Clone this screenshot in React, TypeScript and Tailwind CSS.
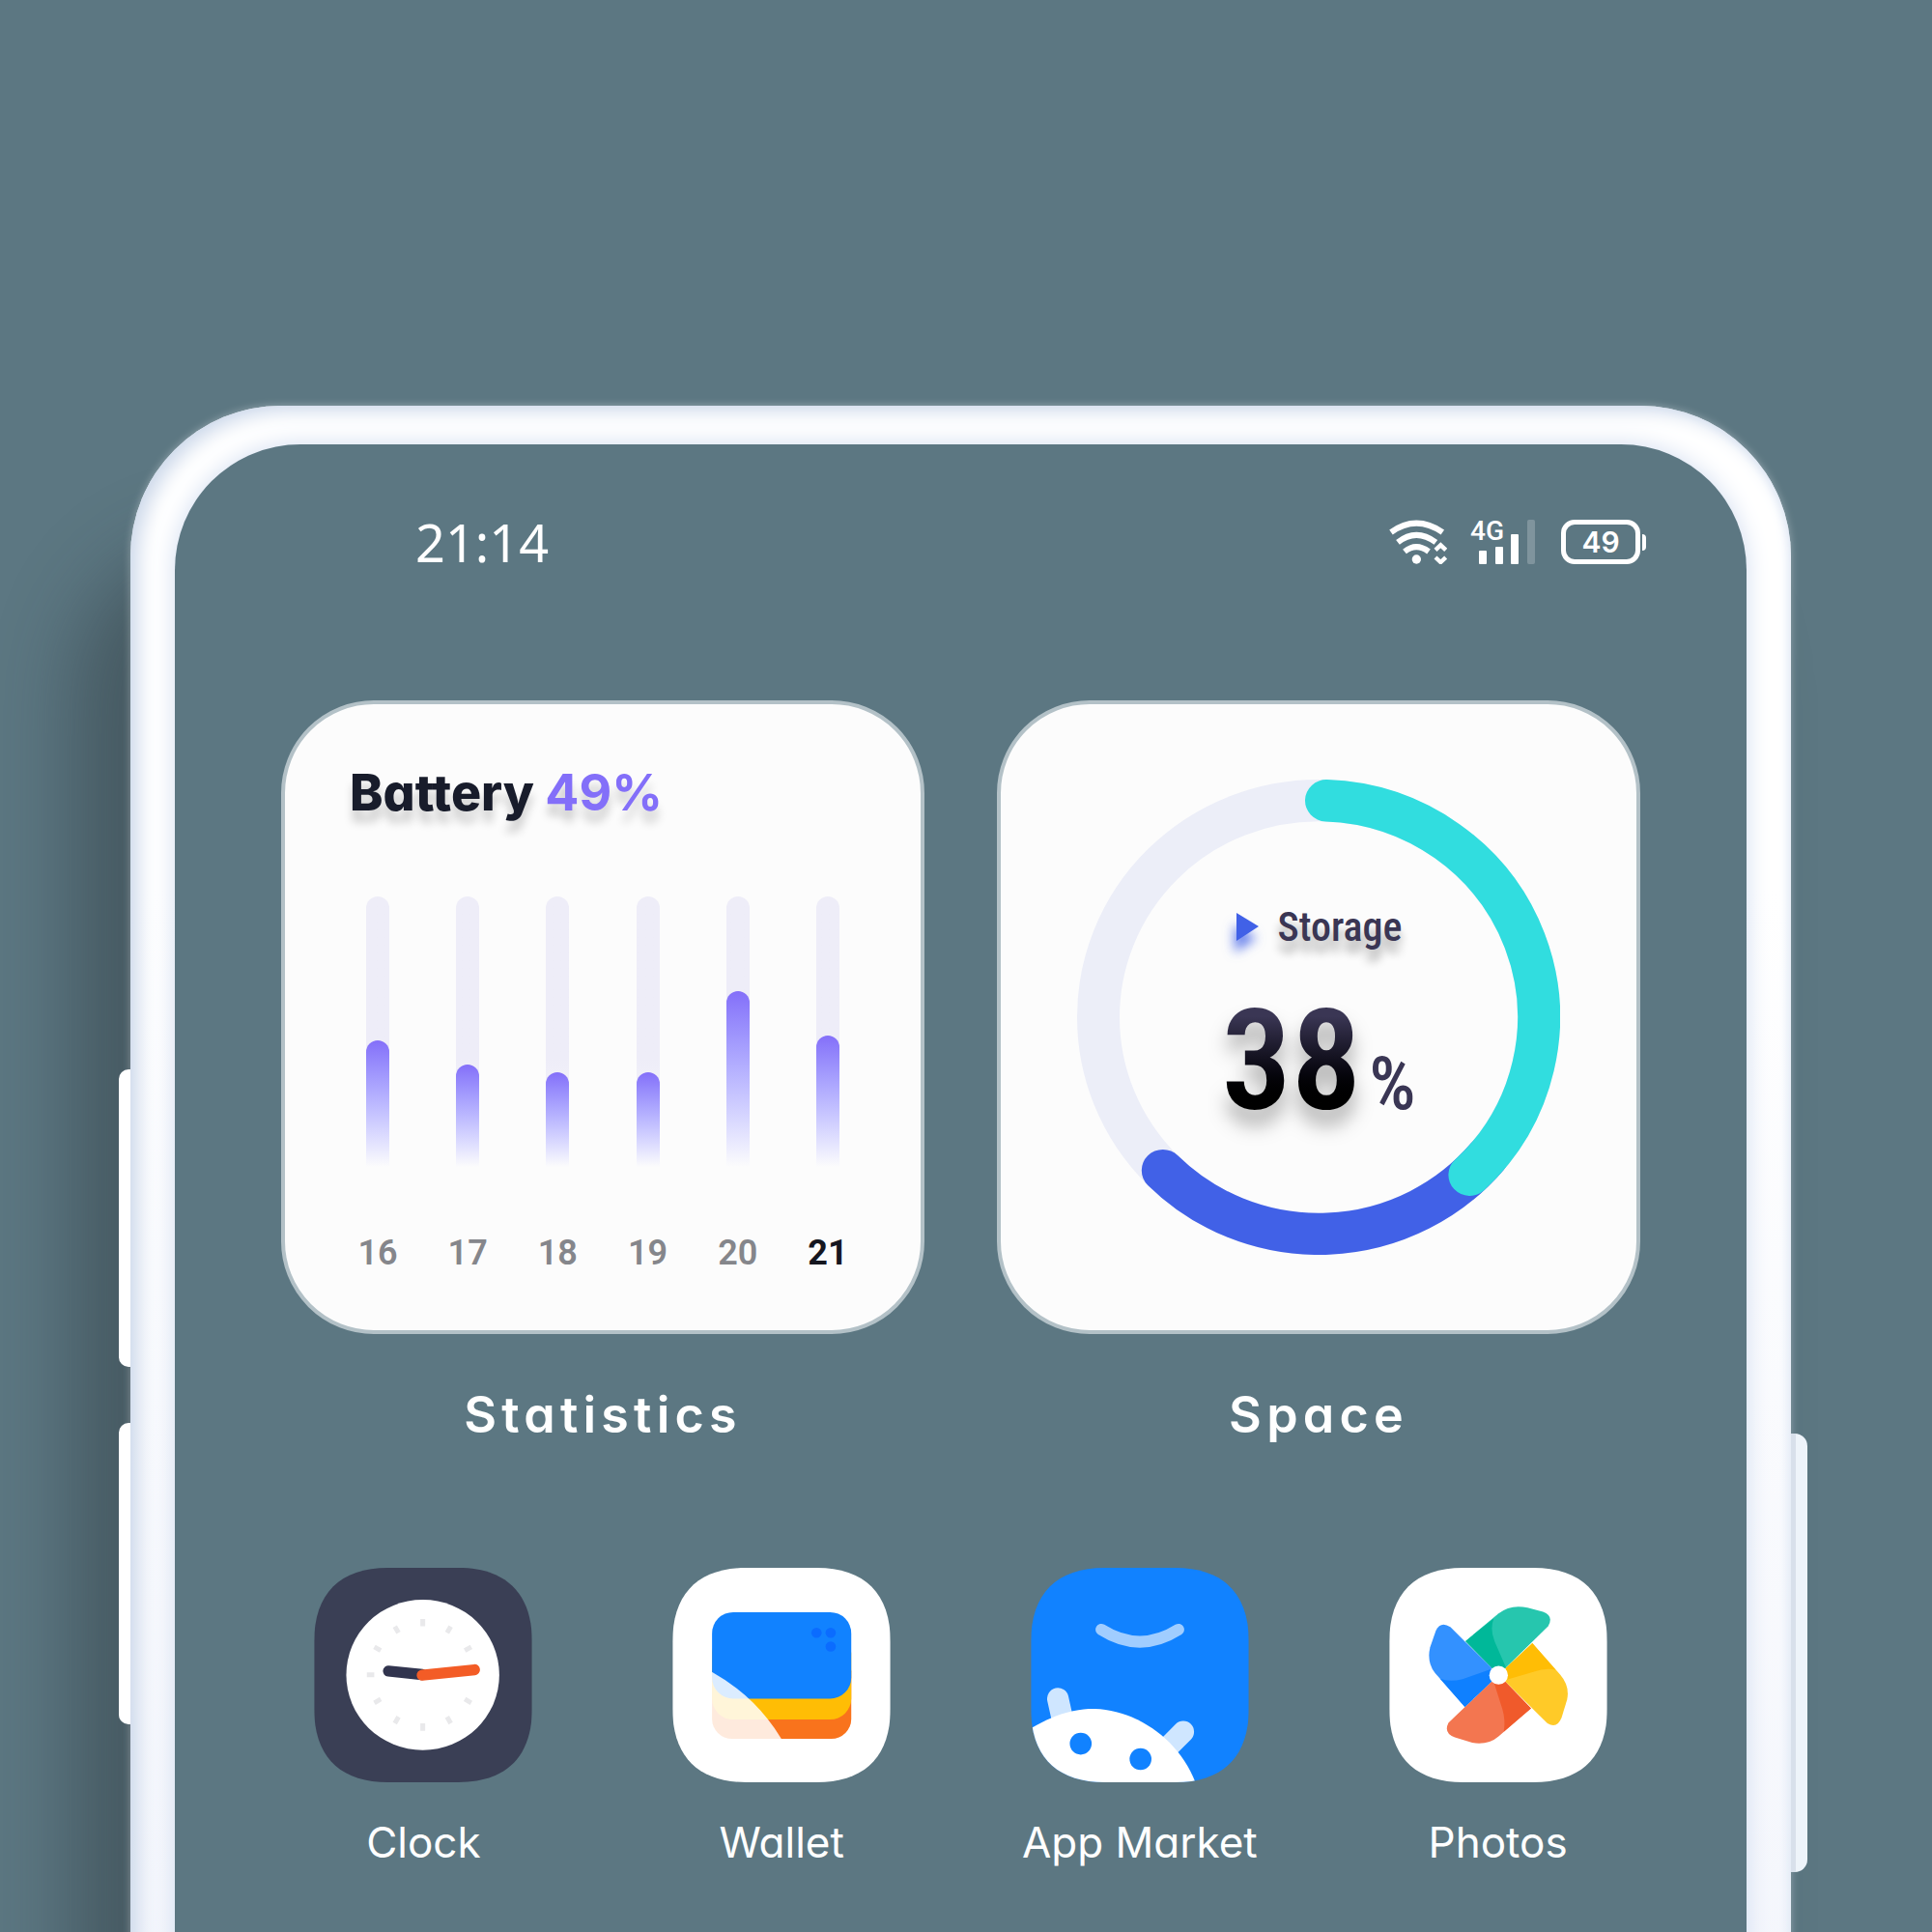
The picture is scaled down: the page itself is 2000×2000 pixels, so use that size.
import React, { useId } from "react";

const days = [
  { day: "16", level: 131 },
  { day: "17", level: 106 },
  { day: "18", level: 98 },
  { day: "19", level: 98 },
  { day: "20", level: 182 },
  { day: "21", level: 136 },
];

function polar(angle: number, r: number) {
  const a = ((angle - 90) * Math.PI) / 180;
  return `${(250 + r * Math.cos(a)).toFixed(1)} ${(250 + r * Math.sin(a)).toFixed(1)}`;
}

function arc(from: number, to: number, r = 228) {
  return `M${polar(from, r)}A${r} ${r} 0 ${to - from > 180 ? 1 : 0} 1 ${polar(to, r)}`;
}

function StatusIcons() {
  return (
    <div className="flex items-center text-white">
      <svg className="mr-6 h-[46px] w-[60px]" viewBox="118 414 180 138" fill="none" aria-label="Wi-Fi">
        <g stroke="white" strokeWidth="18">
          <path d="M124 453Q202 397 284 453" />
          <path d="M145 484Q202 439 263 484" />
          <path d="M166 513Q202 484 241 513" />
        </g>
        <circle cx="203" cy="537" r="14" fill="white" />
        <path d="M262 508L278 493L294 508M262 531L278 546L294 531" stroke="white" strokeWidth="13" />
      </svg>
      <div className="mr-[27px] grid h-[46px] w-[67px]">
        <span className="col-start-1 row-start-1 font-['Roboto',sans-serif] text-[28px] leading-6 font-medium">4G</span>
        <svg className="col-start-1 row-start-1 h-[46px] w-[67px]" viewBox="0 0 67 46" fill="white" aria-label="Signal">
          <rect x="9" y="32" width="8" height="14" rx="1" />
          <rect x="26" y="28" width="8" height="18" rx="1" />
          <rect x="42" y="15" width="8" height="31" rx="1" />
          <rect x="59" y="0" width="8" height="46" rx="2" opacity=".22" />
        </svg>
      </div>
      <div className="flex items-center gap-0.5">
        <span className="flex h-[46px] w-[82px] items-center justify-center rounded-[14px] border-[5px] border-white font-['Inter',sans-serif] text-[30px] font-semibold leading-8">
          49
        </span>
        <span className="h-[17px] w-1 rounded-r-sm bg-white" />
      </div>
    </div>
  );
}

function BatteryCard() {
  return (
    <section className="rounded-[96px] border-4 border-[#b3c1c7] bg-[#fcfcfc] pt-[62px] pb-[60px]">
      <h2 className="pl-[67px] font-['Inter',sans-serif] text-[52px] leading-[60px] font-extrabold text-[#181c2b] [font-feature-settings:'cv11'] [text-shadow:0_12px_10px_rgba(0,0,0,0.18)]">
        Battery <span className="font-bold text-[#836ff9]">49%</span>
      </h2>
      <ul className="mt-[77px] flex justify-between px-[72px]">
        {days.map(({ day, level }) => (
          <li key={day} className="flex w-12 flex-col items-center">
            <div className="flex h-[280px] w-6 flex-col justify-end rounded-t-full bg-linear-to-b from-[#eeedf8] from-60% to-[#fcfcfc]">
              <div className="rounded-t-full bg-linear-to-b from-[#846ff9] to-[#fcfcfc]" style={{ height: level }} />
            </div>
            <span
              className={
                day === "21"
                  ? "mt-[69px] font-['Roboto',sans-serif] text-[36px] leading-10 font-bold text-[#15161f]"
                  : "mt-[69px] font-['Roboto',sans-serif] text-[36px] leading-10 font-semibold text-[#85868b]"
              }
            >
              {day}
            </span>
          </li>
        ))}
      </ul>
    </section>
  );
}

function StorageCard() {
  return (
    <section className="grid place-items-center rounded-[96px] border-4 border-[#b3c1c7] bg-[#fcfcfc]">
      <svg
        className="col-start-1 row-start-1 h-[492px] w-[500px]"
        viewBox="0 0 500 500"
        preserveAspectRatio="none"
        fill="none"
        strokeWidth="44"
        aria-hidden="true"
      >
        <circle cx="250" cy="250" r="228" stroke="#eceef8" />
        <path d={arc(130, 225)} stroke="#4161e7" strokeLinecap="round" />
        <path d={arc(2, 136.7)} stroke="#31dddf" strokeLinecap="round" />
      </svg>
      <div className="col-start-1 row-start-1 flex flex-col items-center pt-2 font-['Roboto_Condensed','Roboto',sans-serif] text-[#3a3654]">
        <h2 className="flex items-center gap-5 text-[42px] leading-[50px] font-medium [text-shadow:0_12px_10px_rgba(0,0,0,0.3)]">
          <svg className="w-6 drop-shadow-[-2px_12px_6px_rgba(65,97,231,0.8)]" viewBox="0 0 24 30" aria-hidden="true">
            <path d="M1 0L24 14L1 29Z" fill="#4161e7" />
          </svg>
          Storage
        </h2>
        <p className="mt-9 flex items-baseline gap-2">
          <span className="bg-linear-to-b from-[#3a3654] from-20% to-black to-80% bg-clip-text text-[144px] leading-[156px] font-semibold text-transparent drop-shadow-[0_16px_10px_rgba(0,0,0,0.3)]">
            38
          </span>
          <span className="text-[76px] font-medium">%</span>
        </p>
      </div>
    </section>
  );
}

function AppIcon({ color, x, children }: { color: string; x: number; children: React.ReactNode }) {
  const id = useId();
  return (
    <svg className="h-[222px] w-[226px]" viewBox="0 0 678 667" aria-hidden="true">
      <clipPath id={id}>
        <path d="M0 230C0 80 80 0 230 0H448C598 0 678 80 678 230V437C678 587 598 667 448 667H230C80 667 0 587 0 437Z" />
      </clipPath>
      <g clipPath={`url(#${id})`}>
        <rect width="678" height="667" fill={color} />
        <g transform={`translate(${-x} -70)`}>{children}</g>
      </g>
    </svg>
  );
}

function ClockIcon() {
  return (
    <AppIcon color="#3a3f55" x={77}>
      <ellipse cx="415" cy="403" rx="238" ry="234" fill="white" />
      {[0, 30, 60, 120, 150, 180, 210, 240, 270, 300, 330].map((a) => (
        <path key={a} d="M415 229V252" stroke="#e9e9eb" strokeWidth="15" transform={`rotate(${a} 415 403)`} />
      ))}
      <path d="M308 391L413 402" stroke="#31344e" strokeWidth="34" strokeLinecap="round" />
      <path d="M413 404L576 387" stroke="#f35c26" strokeWidth="34" strokeLinecap="round" />
    </AppIcon>
  );
}

function WalletIcon() {
  return (
    <AppIcon color="#ffffff" x={78}>
      <rect x="201" y="330" width="433" height="272" rx="62" fill="#f9731c" />
      <rect x="201" y="270" width="433" height="272" rx="66" fill="#ffbd05" />
      <rect x="201" y="208" width="433" height="269" rx="66" fill="#1182ff" />
      <g fill="#0b6cff">
        <circle cx="526" cy="272" r="16" />
        <circle cx="570" cy="272" r="16" />
        <circle cx="570" cy="315" r="16" />
      </g>
      <path d="M199 393Q338 470 418 604H199Z" fill="white" fillOpacity=".85" />
    </AppIcon>
  );
}

function MarketIcon() {
  return (
    <AppIcon color="#1182ff" x={111}>
      <path d="M330 262Q450 338 570 262" fill="none" stroke="#a0cdff" strokeWidth="36" strokeLinecap="round" />
      <path d="M195 477L209 540M585 580L545 620" stroke="#cfe6ff" strokeWidth="67" strokeLinecap="round" />
      <path d="M100 576C190 520 260 508 310 509C440 514 570 600 624 740H100Z" fill="white" />
      <circle cx="266" cy="617" r="34" fill="#1182ff" />
      <circle cx="452" cy="665" r="34" fill="#1182ff" />
    </AppIcon>
  );
}

function PhotosIcon() {
  return (
    <AppIcon color="#ffffff" x={112}>
      <path d="M452 403L349 298L452 212Q490 182 542 194L590 207Q625 220 606 252Z" fill="#26c6ae" />
      <path d="M452 403L349 298L437 228Q424 260 440 300L475 380Z" fill="#00b899" />
      <path d="M452 403L557 304L644 403Q674 438 665 480L648 536Q634 572 604 554Z" fill="#ffca28" />
      <path d="M452 403L557 304L630 388Q600 380 560 394L478 418Z" fill="#ffbd05" />
      <path d="M452 403L553 507L452 594Q420 622 370 614L316 597Q280 584 296 552Z" fill="#f37650" />
      <path d="M452 403L553 507L468 580Q474 545 464 510L437 425Z" fill="#f05a2b" />
      <path d="M452 403L347 503L254 397Q228 364 239 317L257 265Q272 234 302 254Z" fill="#3391ff" />
      <path d="M452 403L347 503L270 415Q300 426 340 416L425 386Z" fill="#0f80ff" />
      <circle cx="452" cy="404" r="29" fill="white" />
    </AppIcon>
  );
}

const apps = [
  { name: "Clock", Icon: ClockIcon },
  { name: "Wallet", Icon: WalletIcon },
  { name: "App Market", Icon: MarketIcon },
  { name: "Photos", Icon: PhotosIcon },
];

export default function App() {
  return (
    <main className="flex min-h-screen flex-col overflow-hidden bg-[#5c7782] pt-[420px] pr-[146px] pl-[135px]">
      <div className="relative -mb-20 flex flex-1 flex-col rounded-t-[156px] bg-linear-to-b from-white from-30% to-[#f4f6fc] px-[46px] pt-10 shadow-[inset_8px_5px_20px_#ccd8ea,inset_-3px_0_8px_#eaf0fa,0_0_8px_rgba(255,255,255,0.35),-60px_140px_80px_rgba(40,50,56,0.42)]">
        <span className="absolute top-[687px] right-full h-[308px] w-3 rounded-l-[10px] bg-white" />
        <span className="absolute top-[1053px] right-full h-[312px] w-3 rounded-l-[10px] bg-white" />
        <span className="absolute top-[1064px] left-full h-[454px] w-[17px] rounded-r-[13px] border-l-[5px] border-[#d8e0eb] bg-[#eef4fa]" />

        <div className="flex-1 rounded-t-[130px] bg-[#5c7782] pb-32 shadow-[0_0_24px_#d2ddf0]">
          <header className="flex items-center justify-between pt-[71px] pr-[104px] pl-[249px]">
            <time className="font-['Noto_Sans',sans-serif] text-[54px] leading-[60px] text-white">21:14</time>
            <StatusIcons />
          </header>

          <div className="mt-[134px] grid grid-cols-2 gap-x-[75px] gap-y-[54px] px-[110px]">
            <BatteryCard />
            <StorageCard />
            {["Statistics", "Space"].map((label) => (
              <p
                key={label}
                className="text-center font-['Inter',sans-serif] text-[52px] leading-[60px] font-semibold tracking-widest text-white [font-feature-settings:'cv11']"
              >
                {label}
              </p>
            ))}
          </div>

          <nav className="mt-32 grid grid-cols-4 px-[72px]">
            {apps.map(({ name, Icon }) => (
              <button
                key={name}
                type="button"
                className="flex flex-col items-center gap-8 font-['Inter',sans-serif] text-[44px] leading-[60px] font-normal text-white [font-feature-settings:'cv11']"
              >
                <Icon />
                {name}
              </button>
            ))}
          </nav>
        </div>
      </div>
    </main>
  );
}
